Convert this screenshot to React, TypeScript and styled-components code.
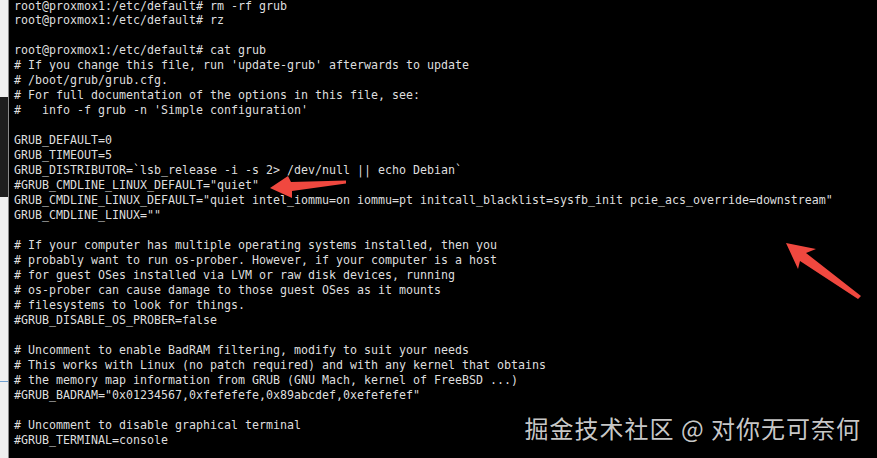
import React from "react";
import styled, { createGlobalStyle } from "styled-components";

const Global = createGlobalStyle`
  html, body { margin: 0; padding: 0; background: #000; }
  body { width: 877px; height: 458px; overflow: hidden; }
`;

const Page = styled.div`
  position: relative;
  display: flex;
  width: 877px;
  height: 458px;
  overflow: hidden;
  background: #000;
`;

const Strip = styled.div`
  display: flex;
  flex-direction: column;
  width: 9px;
  flex: none;
  border-right: 1px solid #8a8a8a;
  box-sizing: border-box;
`;

const StripPart = styled.div<{ $h: number; $dark?: boolean; $line?: string }>`
  height: ${(p) => p.$h}px;
  flex: none;
  background: ${(p) => (p.$dark ? "#1e1e1e" : "#efefef")};
  border-bottom: ${(p) => (p.$line ? `1px solid ${p.$line}` : "none")};
  box-sizing: border-box;
`;

const Terminal = styled.div`
  flex: 1;
  background: #000;
  padding-left: 5px;
`;

const Screen = styled.pre`
  margin: -1.5px 0 0;
  font-family: "DejaVu Sans Mono", "Liberation Mono", monospace;
  font-size: 11.63px;
  line-height: 14.97px;
  color: #dedede;
  white-space: pre;
`;

const Overlay = styled.svg`
  position: absolute;
  left: 0;
  top: 0;
  pointer-events: none;
`;

const Watermark = styled.div`
  position: absolute;
  right: 16px;
  bottom: 17px;
  font-family: "Noto Sans CJK SC", "Noto Sans", sans-serif;
  font-size: 24px;
  line-height: 26px;
  color: rgba(220, 220, 220, 0.92);
  letter-spacing: 1px;
  white-space: nowrap;
`;

const lines = [
  "root@proxmox1:/etc/default# rm -rf grub",
  "root@proxmox1:/etc/default# rz",
  "",
  "root@proxmox1:/etc/default# cat grub",
  "# If you change this file, run 'update-grub' afterwards to update",
  "# /boot/grub/grub.cfg.",
  "# For full documentation of the options in this file, see:",
  "#   info -f grub -n 'Simple configuration'",
  "",
  "GRUB_DEFAULT=0",
  "GRUB_TIMEOUT=5",
  "GRUB_DISTRIBUTOR=`lsb_release -i -s 2> /dev/null || echo Debian`",
  '#GRUB_CMDLINE_LINUX_DEFAULT="quiet"',
  'GRUB_CMDLINE_LINUX_DEFAULT="quiet intel_iommu=on iommu=pt initcall_blacklist=sysfb_init pcie_acs_override=downstream"',
  'GRUB_CMDLINE_LINUX=""',
  "",
  "# If your computer has multiple operating systems installed, then you",
  "# probably want to run os-prober. However, if your computer is a host",
  "# for guest OSes installed via LVM or raw disk devices, running",
  "# os-prober can cause damage to those guest OSes as it mounts",
  "# filesystems to look for things.",
  "#GRUB_DISABLE_OS_PROBER=false",
  "",
  "# Uncomment to enable BadRAM filtering, modify to suit your needs",
  "# This works with Linux (no patch required) and with any kernel that obtains",
  "# the memory map information from GRUB (GNU Mach, kernel of FreeBSD ...)",
  '#GRUB_BADRAM="0x01234567,0xfefefefe,0x89abcdef,0xefefefef"',
  "",
  "# Uncomment to disable graphical terminal",
  "#GRUB_TERMINAL=console",
];

export default function App() {
  return (
    <>
      <Global />
      <Page>
        <Strip>
          <StripPart $h={97} />
          <StripPart $h={100} $dark />
          <StripPart $h={185} $line="#6f9fd0" />
          <StripPart $h={76} />
        </Strip>
        <Terminal>
          <Screen>{lines.join("\n")}</Screen>
        </Terminal>
        <Overlay width="877" height="458" viewBox="0 0 877 458">
          <polygon
            fill="#f0483f"
            points="270,188 288,176 291,182 346,180.5 346,183.5 292,191 292,198"
          />
          <polygon
            fill="#f0483f"
            points="786,243 816,249 806,253 861,296 858,299 800,261 798,269"
          />
        </Overlay>
        <Watermark>掘金技术社区 @ 对你无可奈何</Watermark>
      </Page>
    </>
  );
}
